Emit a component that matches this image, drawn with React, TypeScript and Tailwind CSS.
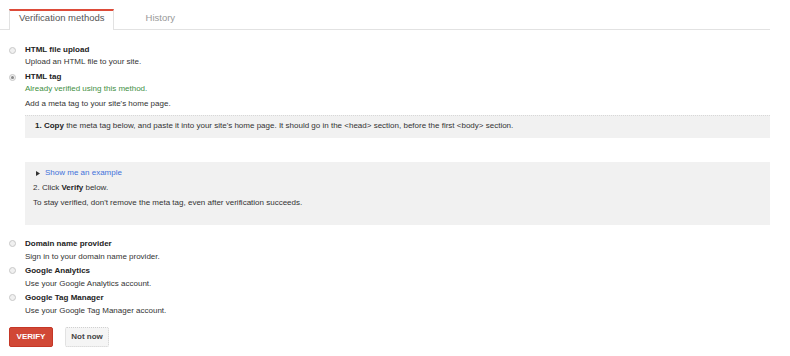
const methods = [
  { title: 'Domain name provider', sub: 'Sign in to your domain name provider.' },
  { title: 'Google Analytics', sub: 'Use your Google Analytics account.' },
  { title: 'Google Tag Manager', sub: 'Use your Google Tag Manager account.' },
];

function Radio({ checked }: { checked?: boolean }) {
  return (
    <span className="mt-[3px] flex h-[7px] w-[7px] shrink-0 items-center justify-center rounded-full border border-[#c8c8c8] bg-[#f0f0f0]">
      {checked && <span className="h-[3px] w-[3px] rounded-full bg-[#888]" />}
    </span>
  );
}

function Option({ title, sub, checked, green, tall }: { title: string; sub: string; checked?: boolean; green?: boolean; tall?: boolean }) {
  return (
    <div className="flex gap-[9px] pl-[9px]">
      <Radio checked={checked} />
      <div className={tall ? 'leading-[13px]' : 'leading-[12px]'}>
        <div className="font-bold text-[#222]">{title}</div>
        <div className={green ? 'text-[#3f8f3f]' : 'text-[#333]'}>{sub}</div>
      </div>
    </div>
  );
}

export default function App() {
  return (
    <div className="h-[356px] w-[790px] overflow-hidden bg-white pt-[9px] text-[8px] text-[#333] [font-family:'Liberation_Sans',Arial,sans-serif]">
      {/* Tabs */}
      <div className="mr-[20px] flex border-b border-[#e2e2e2] pl-[9px]">
        <div className="-mb-px h-[21px] border-x border-t-2 border-x-[#e2e2e2] border-t-[#dd4b39] bg-white pl-[9px] pr-[8px] pt-[1px] text-[9.5px] leading-[12px] text-[#555]">
          Verification methods
        </div>
        <div className="pl-[32px] pt-[3px] text-[9.5px] leading-[12px] text-[#999]">History</div>
      </div>

      <div className="mt-[14px] flex flex-col gap-[3px]">
        <Option title="HTML file upload" sub="Upload an HTML file to your site." />
        <Option title="HTML tag" sub="Already verified using this method." checked green />
      </div>

      <div className="ml-[25px] mr-[20px]">
        <p className="mt-[3px] leading-[12px]">Add a meta tag to your site's home page.</p>
        <div className="mt-[5px] border-t border-dotted border-[#d8d8d8] bg-[#f1f1f1] pb-[6px] pl-[10px] pt-[4px] leading-[12px]">
          <b className="text-[#222]">1. Copy</b> the meta tag below, and paste it into your site's home page. It should go in the &lt;head&gt; section, before the first &lt;body&gt; section.
        </div>
        <div className="mt-[24px] h-[63px] bg-[#f1f1f1] pl-[8px] pt-[5px] leading-[12px]">
          <div className="flex items-center gap-[5px] pl-[3px]">
            <svg width="4" height="5" viewBox="0 0 4 5">
              <path d="M0 0 L4 2.5 L0 5 Z" fill="#333" />
            </svg>
            <span className="text-[#4272db]">Show me an example</span>
          </div>
          <div className="mt-[3px]">
            2. Click <b className="text-[#222]">Verify</b> below.
          </div>
          <div className="mt-[3px]">To stay verified, don't remove the meta tag, even after verification succeeds.</div>
        </div>
      </div>

      <div className="mt-[12px] flex flex-col">
        {methods.map((m) => (
          <div key={m.title} className="h-[27px]">
            <Option title={m.title} sub={m.sub} tall />
          </div>
        ))}
      </div>

      <div className="mt-[9px] flex gap-[12px] pl-[9px]">
        <button className="h-[20px] w-[44px] rounded-[2px] border border-[#c53727] bg-[#d14836] text-[8px] font-bold text-white">
          VERIFY
        </button>
        <button className="h-[20px] w-[44px] rounded-[2px] border border-dotted border-[#d0d0d0] bg-[#f5f5f5] text-[8px] font-bold text-[#444]">
          Not now
        </button>
      </div>
    </div>
  );
}
